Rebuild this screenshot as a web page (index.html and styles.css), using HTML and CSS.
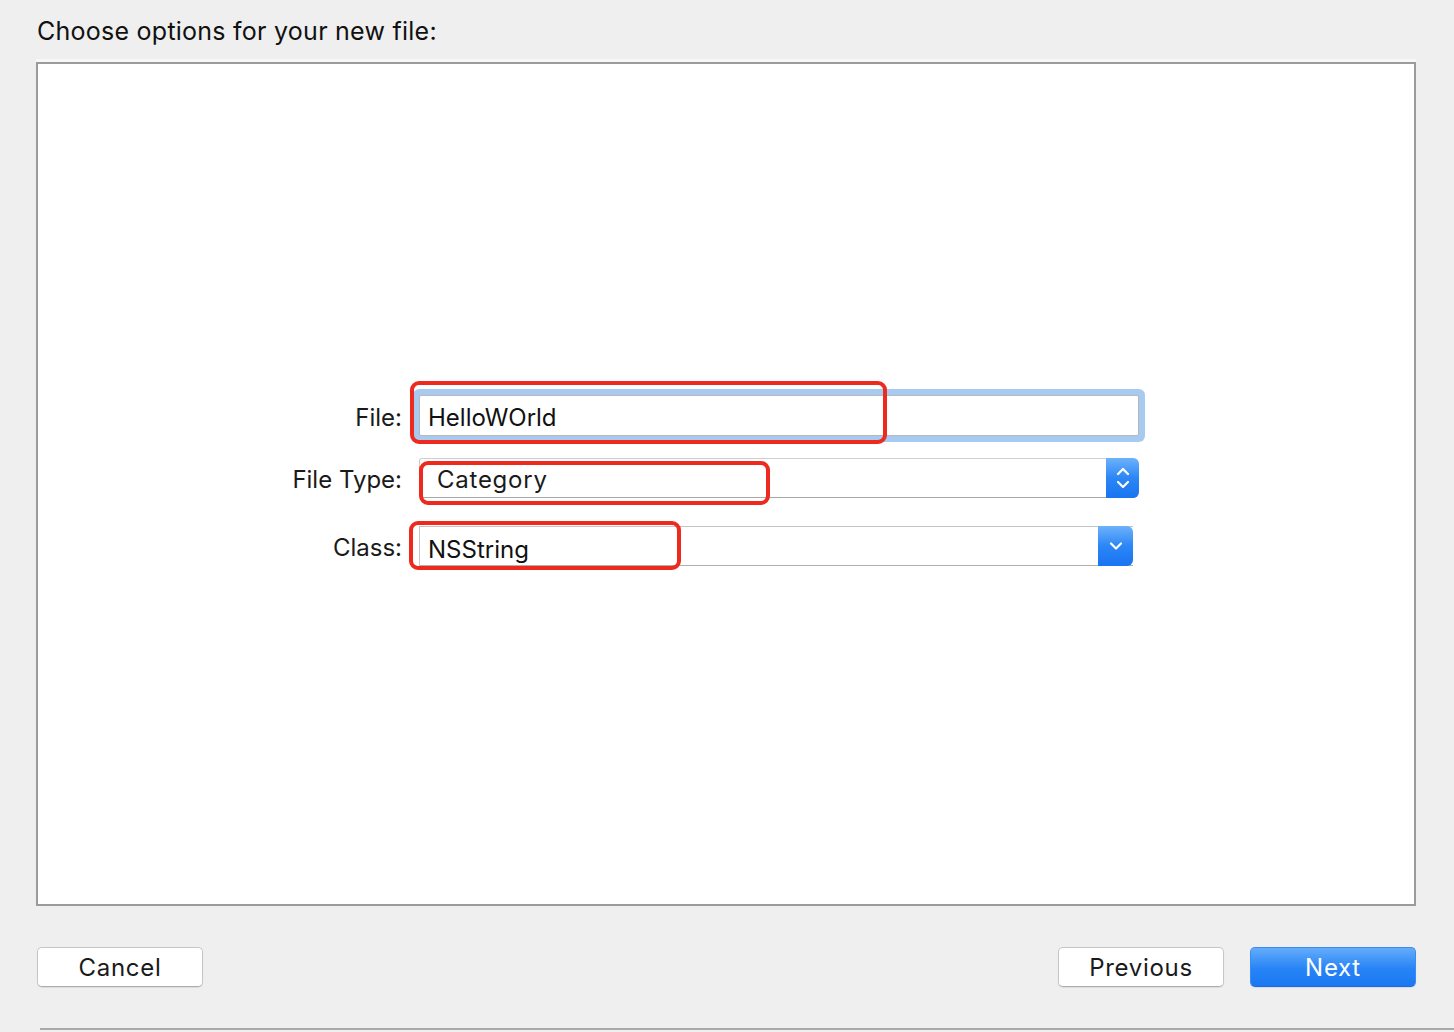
FILE: index.html
```
<!DOCTYPE html>
<html>
<head>
<meta charset="utf-8">
<link rel="stylesheet" href="styles.css">
</head>
<body>
<div class="page">
  <div class="title">Choose options for your new file:</div>
  <div class="panel">
    <div class="form">
      <div class="label">File:</div>
      <div class="cell">
        <div class="textfield">HelloWOrld</div>
        <div class="mark mark-a"></div>
      </div>
      <div class="label row2">File Type:</div>
      <div class="cell row2">
        <div class="popup">
          <span class="popup-text">Category</span>
          <span class="stepper">
            <svg width="16" height="28" viewBox="0 0 16 28"><path d="M3 10 L8 5 L13 10 M3 18 L8 23 L13 18" fill="none" stroke="#fff" stroke-width="2.2" stroke-linecap="round" stroke-linejoin="round"/></svg>
          </span>
        </div>
        <div class="mark mark-b"></div>
      </div>
      <div class="label row3">Class:</div>
      <div class="cell row3">
        <div class="combo">
          <span class="combo-text">NSString</span>
          <span class="combo-btn">
            <svg width="16" height="12" viewBox="0 0 16 12"><path d="M3 3.5 L8 8.5 L13 3.5" fill="none" stroke="#fff" stroke-width="2.2" stroke-linecap="round" stroke-linejoin="round"/></svg>
          </span>
        </div>
        <div class="mark mark-c"></div>
      </div>
    </div>
  </div>
  <div class="footer">
    <button class="btn">Cancel</button>
    <div class="right">
      <button class="btn">Previous</button>
      <button class="btn primary">Next</button>
    </div>
  </div>
</div>
<div class="bottomline"></div>
</body>
</html>
```
FILE: styles.css
```
html, body {
  margin: 0;
  padding: 0;
  background: #efefef;
  font-family: Inter, "Liberation Sans", Arial, sans-serif;
  color: #1a1a1a;
  overflow: hidden;
}
.page {
  padding: 17px 38px 0 36px;
  height: 1011px;
}
.title {
  font-size: 25px;
  letter-spacing: 0.25px;
  line-height: 28px;
  padding-bottom: 2px;
  padding-left: 1px;
  color: #111;
}
.panel {
  margin-top: 15px;
  height: 844px;
  box-sizing: border-box;
  border: 2px solid #9b9b9b;
  background: #fff;
  box-shadow: 0 -3px 0 0 #f7f7f7;
}
.form {
  display: grid;
  grid-template-columns: 381px 720px;
  align-items: center;
  padding-top: 331px;
}
.label {
  font-size: 24px;
  line-height: 30px;
  padding-top: 4px;
  text-align: right;
  padding-right: 17px;
  color: #1a1a1a;
}
.cell {
  position: relative;
}
.row2 { margin-top: 22px; }
.row3 { margin-top: 28px; }
.textfield {
  height: 41px;
  box-sizing: border-box;
  border: 1px solid #b8b8b8;
  background: #fff;
  box-shadow: 0 0 0 6px #a7caf1;
  border-radius: 2px;
  font-size: 24px;
  line-height: 41px;
  padding-top: 1px;
  padding-left: 8px;
  color: #111;
}
.popup {
  height: 40px;
  box-sizing: border-box;
  display: flex;
  align-items: stretch;
  border-top: 1px solid #cfcfcf;
  border-left: 1px solid #c8c8c8;
  border-bottom: 1px solid #a8a8a8;
  border-radius: 3px 6px 6px 3px;
  background: #fff;
}
.popup-text {
  flex: 1;
  font-size: 24px;
  letter-spacing: 0.75px;
  line-height: 39px;
  padding-top: 1px;
  padding-left: 17px;
  color: #1a1a1a;
}
.stepper, .combo-btn {
  display: flex;
  align-items: center;
  justify-content: center;
  background: linear-gradient(#6db2fb, #2c86f6 50%, #1874f1);
  border-radius: 0 6px 6px 0;
  margin: -1px 0 -1px 0;
}
.stepper {
  width: 33px;
}
.combo {
  width: 714px;
  height: 40px;
  box-sizing: border-box;
  display: flex;
  align-items: stretch;
  border-top: 1px solid #c4c4c4;
  border-left: 1px solid #c8c8c8;
  border-bottom: 1px solid #b0b0b0;
  background: #fff;
}
.combo-text {
  flex: 1;
  font-size: 24px;
  line-height: 42px;
  padding-top: 2px;
  padding-left: 8px;
  color: #111;
}
.combo-btn {
  width: 35px;
}
.mark {
  position: absolute;
  box-sizing: border-box;
  border: 4px solid #ee2a1f;
  border-radius: 9px;
  pointer-events: none;
}
.mark-a { left: -9px; top: -14px; width: 477px; height: 63px; }
.mark-b { left: 0; top: 3px; width: 351px; height: 44px; }
.mark-c { left: -10px; top: -5px; width: 272px; height: 49px; }
.footer {
  margin-top: 41px;
  display: flex;
  justify-content: space-between;
  padding-left: 1px;
}
.right {
  display: flex;
  gap: 26px;
}
.btn {
  width: 166px;
  height: 40px;
  box-sizing: border-box;
  border: 1px solid #c6c6c6;
  border-bottom-color: #adadad;
  border-radius: 5px;
  background: #fff;
  font-family: Inter, "Liberation Sans", Arial, sans-serif;
  font-size: 24px;
  letter-spacing: 0.7px;
  color: #1a1a1a;
  padding: 0;
  box-shadow: 0 1px 1px rgba(0,0,0,0.08);
}
.btn.primary {
  background: linear-gradient(#64acfa, #2784f6 55%, #1a78f3);
  border-color: #3a8cf3;
  border-bottom-color: #1b6ae0;
  color: #fff;
}
.bottomline {
  height: 2px;
  margin-left: 40px;
  background: #a9a9a9;
}
```
